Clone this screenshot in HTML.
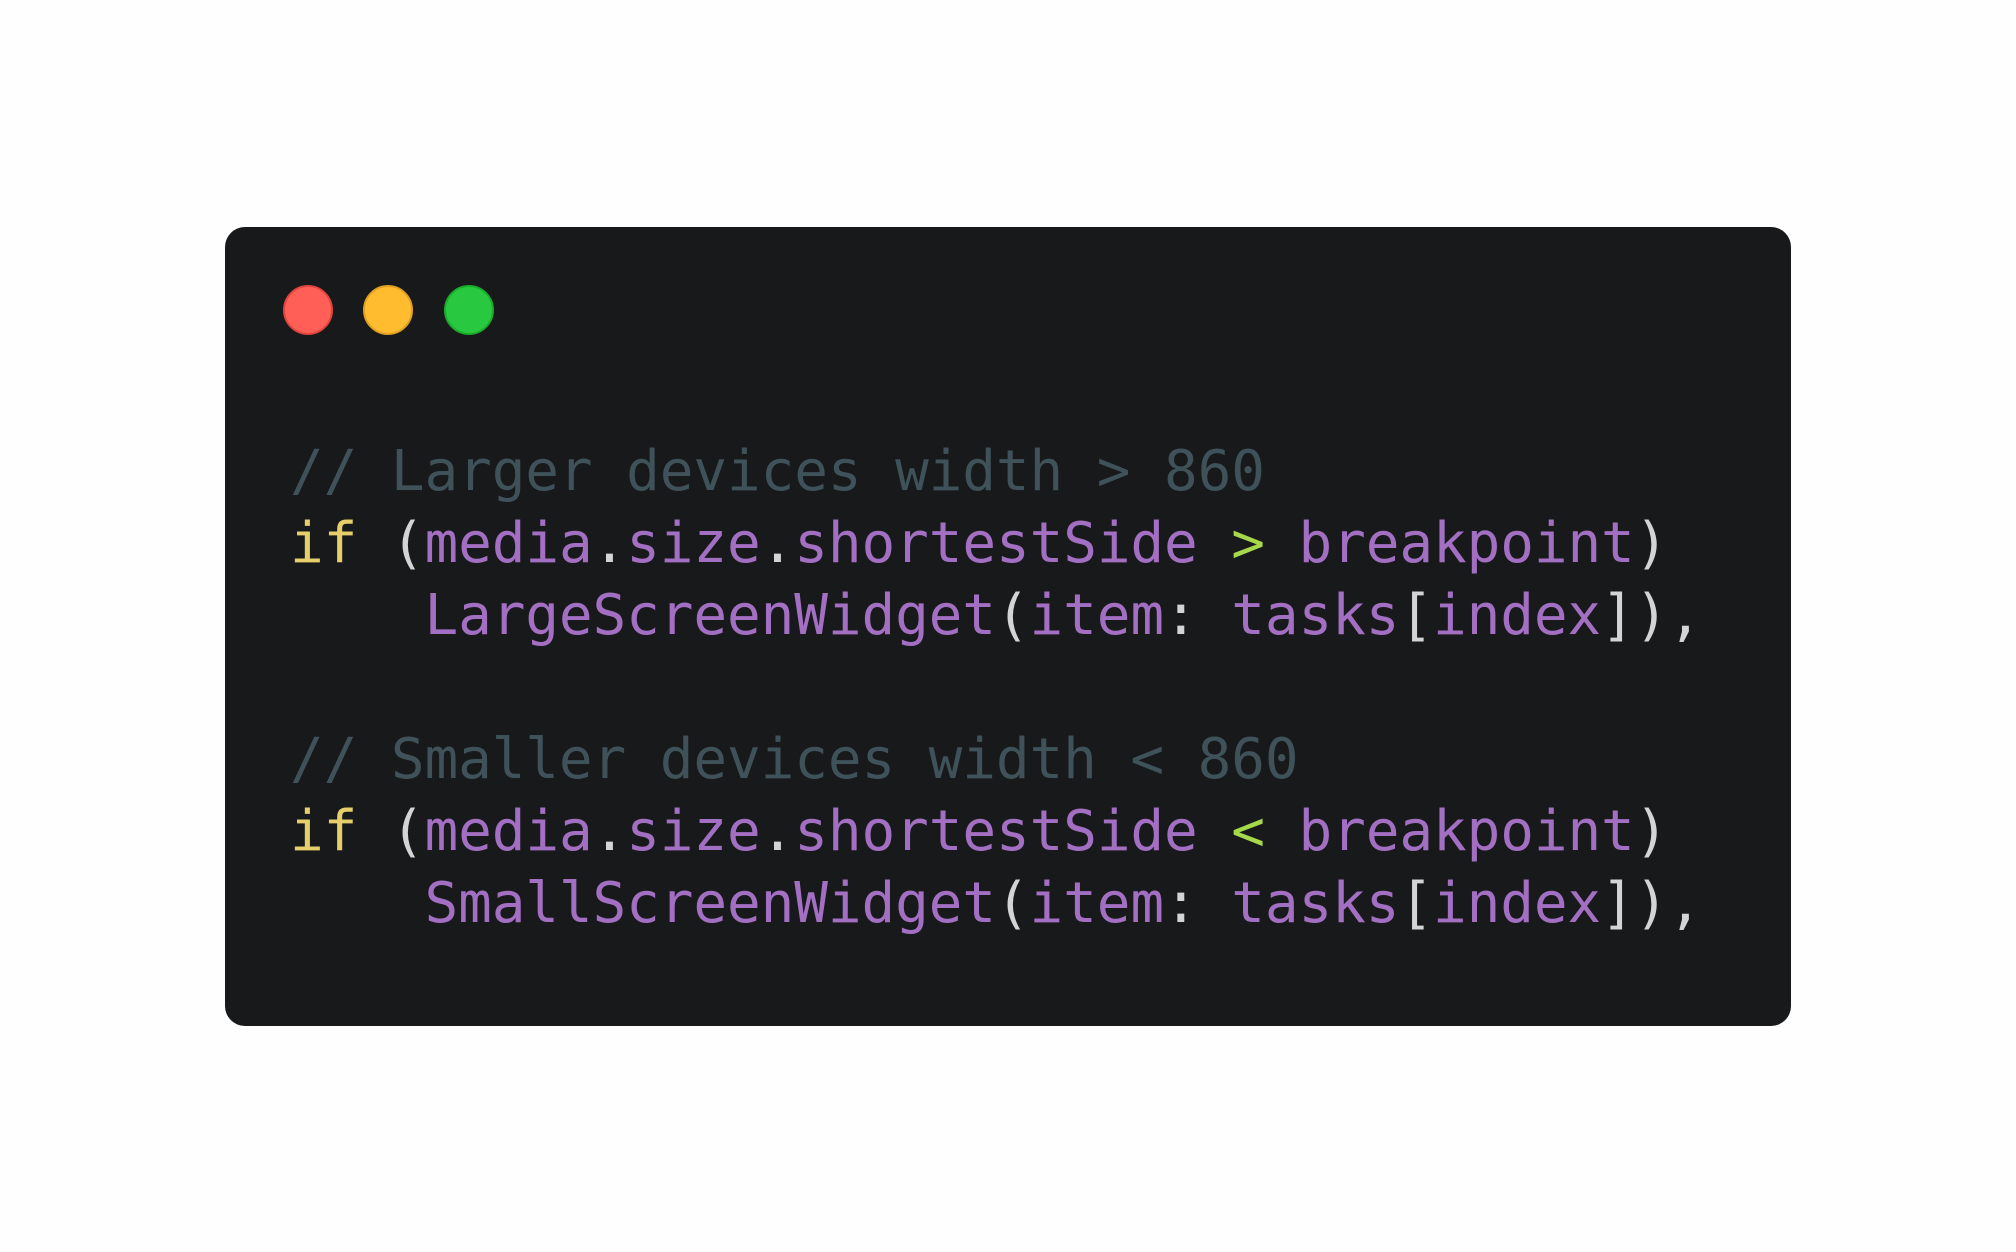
<!DOCTYPE html>
<html><head><meta charset="utf-8"><style>
html,body{margin:0;padding:0;background:#fefefe;width:2016px;height:1252px;overflow:hidden}
.card{position:absolute;left:225px;top:227px;width:1566px;height:799px;background:#18191b;border-radius:20px}
.dot{position:absolute;top:285px;width:50px;height:50px;border-radius:50%;box-sizing:border-box}
pre{position:absolute;left:290px;top:436px;margin:0;font-family:"DejaVu Sans Mono","Liberation Mono",monospace;font-size:56px;line-height:72px;letter-spacing:-0.1px;color:#a36fc3}
.c{color:#3f5259}.k{color:#e6cf6a}.w{color:#d4d4d4}.g{color:#a6d94a}
</style></head><body>
<div class="card"></div>
<div class="dot" style="left:283px;background:#ff5f57;border:2px solid #e0443e"></div>
<div class="dot" style="left:363px;background:#febc2e;border:2px solid #dea123"></div>
<div class="dot" style="left:444px;background:#28c840;border:2px solid #1aab29"></div>
<pre><span class="c">// Larger devices width &gt; 860</span>
<span class="k">if</span> <span class="w">(</span>media<span class="w">.</span>size<span class="w">.</span>shortestSide <span class="g">&gt;</span> breakpoint<span class="w">)</span>
    LargeScreenWidget<span class="w">(</span>item<span class="w">:</span> tasks<span class="w">[</span>index<span class="w">]),</span>

<span class="c">// Smaller devices width &lt; 860</span>
<span class="k">if</span> <span class="w">(</span>media<span class="w">.</span>size<span class="w">.</span>shortestSide <span class="g">&lt;</span> breakpoint<span class="w">)</span>
    SmallScreenWidget<span class="w">(</span>item<span class="w">:</span> tasks<span class="w">[</span>index<span class="w">]),</span></pre>
</body></html>
